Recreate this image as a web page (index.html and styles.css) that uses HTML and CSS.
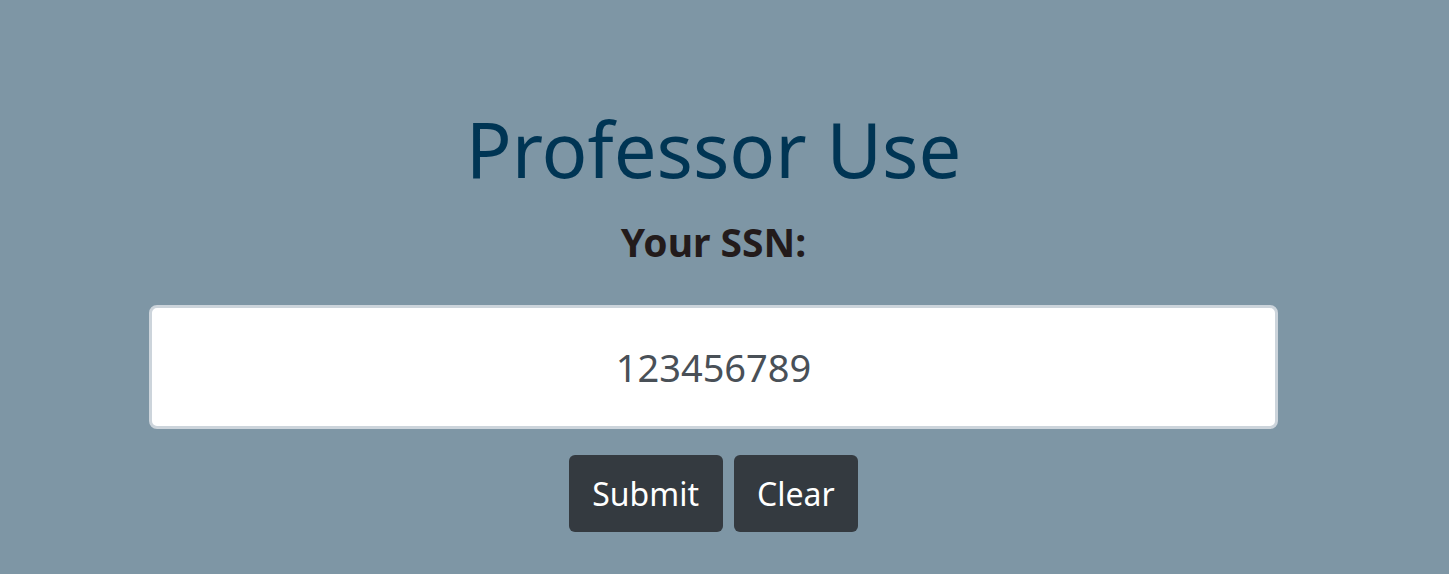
FILE: index.html
```html
<!DOCTYPE html>
<html>
<head>
<meta charset="utf-8">
<link rel="stylesheet" href="styles.css">
</head>
<body>
<main class="page">
  <h1 class="title">Professor Use</h1>
  <label class="label" for="ssn">Your SSN:</label>
  <input class="field" id="ssn" type="text" value="123456789">
  <div class="actions">
    <button class="btn">Submit</button>
    <button class="btn">Clear</button>
  </div>
</main>
</body>
</html>
```
FILE: styles.css
```css
html, body {
  margin: 0;
  padding: 0;
  background: #7e96a5;
  height: 100%;
}
body {
  font-family: "Noto Sans", "Open Sans", sans-serif;
}
.page {
  width: 1427px;
  display: flex;
  flex-direction: column;
  align-items: center;
  padding-top: 94px;
}
.title {
  margin: 0;
  font-size: 76px;
  font-weight: 400;
  color: #003554;
  line-height: 110px;
}
.label {
  margin-top: 15px;
  font-size: 39px;
  font-weight: 700;
  color: #231b1b;
  line-height: 46px;
}
.field {
  margin-top: 40px;
  box-sizing: border-box;
  width: 1129px;
  height: 124px;
  border: 3px solid #ccd4db;
  border-radius: 8px;
  background: #fff;
  text-align: center;
  font-family: inherit;
  font-size: 38px;
  color: #495057;
  outline: none;
}
.actions {
  display: flex;
  gap: 11px;
  margin-top: 26px;
}
.btn {
  height: 77px;
  padding: 0 23.5px;
  border: none;
  border-radius: 6px;
  background: #343a40;
  color: #fff;
  font-family: inherit;
  font-size: 32px;
}
```
